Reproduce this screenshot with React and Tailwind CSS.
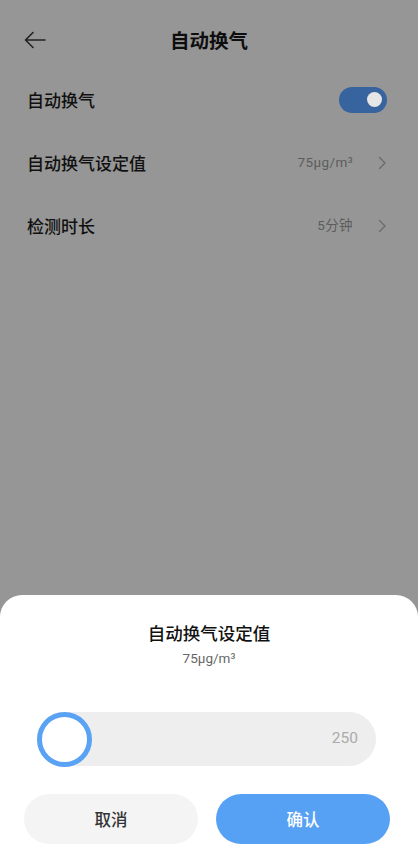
import React from "react";

const font = { fontFamily: '"Noto Sans CJK SC", "Noto Sans", sans-serif' };
const numFont = { fontFamily: 'Roboto, "Noto Sans CJK SC", sans-serif' };

function Chevron() {
  return (
    <svg width="10" height="14" viewBox="0 0 10 14" fill="none">
      <path d="M2.5 1.5 L8 7 L2.5 12.5" stroke="#6b6b6b" strokeWidth="1.4" strokeLinecap="round" strokeLinejoin="round" />
    </svg>
  );
}

function Row({ label, value, children }) {
  return (
    <div className="flex items-center justify-between h-[63px] pl-[27px] pr-[31px]">
      <span className="text-[17px] font-medium text-[#101010]">{label}</span>
      {children || (
        <div className="flex items-center gap-[24px]">
          <span className="text-[13.5px] text-[#5c5c5c] tracking-[0.4px]" style={numFont}>{value}</span>
          <Chevron />
        </div>
      )}
    </div>
  );
}

export default function App() {
  return (
    <div className="relative w-[418px] h-[859px] bg-[#969696] overflow-hidden flex flex-col" style={font}>
      {/* header */}
      <div className="relative flex items-center justify-center h-[68px] pt-[12px]">
        <svg className="absolute left-[23px] top-[30px]" width="24" height="20" viewBox="0 0 24 20" fill="none">
          <path d="M22 10 H3 M10 2.5 L2.5 10 L10 17.5" stroke="#222" strokeWidth="1.6" strokeLinecap="round" strokeLinejoin="round" />
        </svg>
        <span className="text-[19.5px] font-bold text-[#0e0e0e] leading-[28px]">自动换气</span>
      </div>

      <Row label="自动换气">
        <div className="w-[48px] h-[26px] rounded-full bg-[#37649e] flex items-center justify-end pr-[5px]">
          <div className="w-[15px] h-[15px] rounded-full bg-[#e6e6e6]" />
        </div>
      </Row>
      <Row label="自动换气设定值" value="75μg/m³" />
      <Row label="检测时长" value="5分钟" />

      <div className="flex-1" />

      {/* bottom sheet */}
      <div className="h-[264px] bg-white rounded-t-[22px] flex flex-col">
        <div className="flex flex-col items-center pt-[25px]">
          <span className="text-[17.5px] font-medium text-[#111] leading-[26px]">自动换气设定值</span>
          <span className="text-[13.5px] text-[#666] leading-[20px] mt-[2px]" style={numFont}>75μg/m³</span>
        </div>

        <div className="mt-[44px] ml-[37px] mr-[42px] h-[54px] rounded-full bg-[#eeeeee] flex items-center justify-between">
          <div className="w-[55px] h-[55px] rounded-full border-[5px] border-[#5aa2f3] bg-white" />
          <span className="text-[15.5px] text-[#aaaaaa] pr-[18px]" style={numFont}>250</span>
        </div>

        <div className="mt-[28px] flex gap-[18px] pl-[24px] pr-[28px]">
          <button className="flex-1 h-[50px] rounded-full bg-[#f4f4f4] text-[16.5px] font-medium text-[#333]">取消</button>
          <button className="flex-1 h-[50px] rounded-full bg-[#57a1f4] text-[16.5px] font-medium text-white">确认</button>
        </div>
      </div>
    </div>
  );
}
